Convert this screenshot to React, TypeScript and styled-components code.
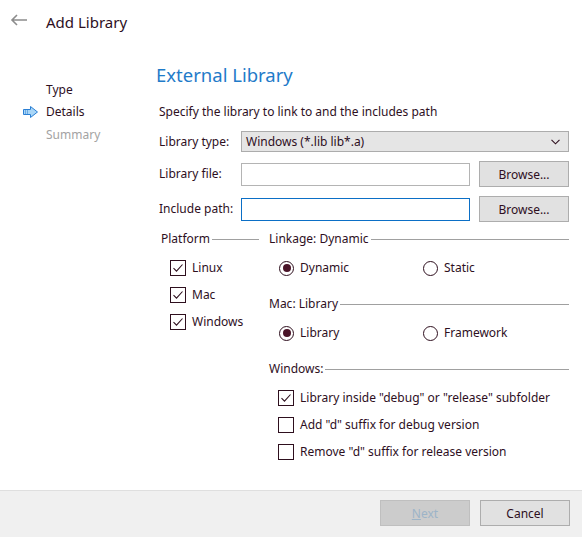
import styled, { createGlobalStyle } from "styled-components";

const TEXT = "#2e0f1e";

const GlobalStyle = createGlobalStyle`
  html, body {
    margin: 0;
    padding: 0;
    background: #ffffff;
  }
  body {
    font-family: "Noto Sans", "Open Sans", sans-serif;
    font-size: 12px;
    color: ${TEXT};
  }
`;

function BackArrow() {
  return (
    <svg width="18" height="12" viewBox="0 0 18 12">
      <path d="M17 6H2M7 1L2 6l5 5" fill="none" stroke="#8c8c8c" strokeWidth="1.6" />
    </svg>
  );
}

function StepArrow() {
  return (
    <svg width="17" height="14" viewBox="0 0 17 14">
      <path
        d="M1.5 4.5h7V1.5L15.5 7l-7 5.5v-3h-7z"
        fill="#a9d6f7"
        stroke="#2a7fd4"
        strokeWidth="1"
      />
      <path d="M3 6h1M5 6h1M3 8h1M5 8h1" stroke="#2a7fd4" strokeWidth="1" />
    </svg>
  );
}

function Chevron() {
  return (
    <svg width="9" height="6" viewBox="0 0 9 6">
      <path d="M0.5 0.8L4.5 4.8L8.5 0.8" fill="none" stroke={TEXT} strokeWidth="1.1" />
    </svg>
  );
}

function Check({ checked }: { checked: boolean }) {
  return (
    <CheckBox>
      {checked && (
        <svg width="14" height="14" viewBox="0 0 14 14">
          <path d="M2.5 7.2L5.5 10.2L11.5 3.5" fill="none" stroke={TEXT} strokeWidth="1.1" />
        </svg>
      )}
    </CheckBox>
  );
}

function CheckItem({ label, checked }: { label: string; checked: boolean }) {
  return (
    <Option>
      <Check checked={checked} />
      <span>{label}</span>
    </Option>
  );
}

function RadioItem({ label, selected }: { label: string; selected: boolean }) {
  return (
    <Option>
      <RadioCircle>{selected && <RadioDot />}</RadioCircle>
      <span>{label}</span>
    </Option>
  );
}

function GroupTitle({ children }: { children: string }) {
  return (
    <TitleRow>
      <span>{children}</span>
      <TitleLine />
    </TitleRow>
  );
}

export default function App() {
  return (
    <>
      <GlobalStyle />
      <Page>
        <Header>
          <BackButton>
            <BackArrow />
          </BackButton>
          <HeaderTitle>Add Library</HeaderTitle>
        </Header>

        <Main>
          <Sidebar>
            <Step>
              <StepIcon />
              <StepLabel>Type</StepLabel>
            </Step>
            <Step>
              <StepIcon>
                <StepArrow />
              </StepIcon>
              <StepLabel>Details</StepLabel>
            </Step>
            <Step>
              <StepIcon />
              <StepLabel $muted>Summary</StepLabel>
            </Step>
          </Sidebar>

          <Content>
            <Heading>External Library</Heading>
            <Description>Specify the library to link to and the includes path</Description>

            <FormGrid>
              <FieldLabel>Library type:</FieldLabel>
              <Combo>
                <span>Windows (*.lib lib*.a)</span>
                <Chevron />
              </Combo>

              <FieldLabel>Library file:</FieldLabel>
              <TextInput />
              <Button>Browse...</Button>

              <FieldLabel>Include path:</FieldLabel>
              <TextInput $focused />
              <Button>Browse...</Button>
            </FormGrid>

            <Groups>
              <PlatformColumn>
                <GroupTitle>Platform</GroupTitle>
                <PlatformList>
                  <CheckItem label="Linux" checked />
                  <CheckItem label="Mac" checked />
                  <CheckItem label="Windows" checked />
                </PlatformList>
              </PlatformColumn>

              <OptionsColumn>
                <Group>
                  <GroupTitle>Linkage: Dynamic</GroupTitle>
                  <RadioRow>
                    <RadioItem label="Dynamic" selected />
                    <RadioItem label="Static" selected={false} />
                  </RadioRow>
                </Group>
                <Group>
                  <GroupTitle>Mac: Library</GroupTitle>
                  <RadioRow>
                    <RadioItem label="Library" selected />
                    <RadioItem label="Framework" selected={false} />
                  </RadioRow>
                </Group>
                <Group>
                  <GroupTitle>Windows:</GroupTitle>
                  <WindowsList>
                    <CheckItem label={'Library inside "debug" or "release" subfolder'} checked />
                    <CheckItem label={'Add "d" suffix for debug version'} checked={false} />
                    <CheckItem label={'Remove "d" suffix for release version'} checked={false} />
                  </WindowsList>
                </Group>
              </OptionsColumn>
            </Groups>
          </Content>
        </Main>

        <Footer>
          <Button $disabled>
            <u>N</u>ext
          </Button>
          <Button>Cancel</Button>
        </Footer>
      </Page>
    </>
  );
}

const Page = styled.div`
  width: 582px;
  height: 537px;
  display: flex;
  flex-direction: column;
  background: #ffffff;
  overflow: hidden;
`;

const Header = styled.div`
  height: 44px;
  display: flex;
  align-items: center;
  padding-left: 10px;
`;

const BackButton = styled.div`
  width: 18px;
  height: 12px;
  display: flex;
  margin-top: -4px;
`;

const HeaderTitle = styled.h1`
  margin: 0 0 0 18px;
  font-size: 15px;
  font-weight: 400;
  color: ${TEXT};
`;

const Main = styled.div`
  flex: 1;
  display: flex;
`;

const Sidebar = styled.div`
  width: 156px;
  padding-top: 34px;
  display: flex;
  flex-direction: column;
`;

const Step = styled.div`
  height: 22.5px;
  display: flex;
  align-items: center;
`;

const StepIcon = styled.div`
  width: 46px;
  display: flex;
  justify-content: flex-start;
  padding-left: 22px;
  box-sizing: border-box;
`;

const StepLabel = styled.span<{ $muted?: boolean }>`
  color: ${({ $muted }) => ($muted ? "#a3a3a3" : TEXT)};
`;

const Content = styled.div`
  flex: 1;
  padding: 18px 13px 0 0;
  display: flex;
  flex-direction: column;
`;

const Heading = styled.h2`
  margin: 0;
  font-size: 18.5px;
  line-height: 26px;
  font-weight: 400;
  color: #1f7bc9;
`;

const Description = styled.p`
  margin: 15px 0 0 3px;
  line-height: 18px;
`;

const FormGrid = styled.div`
  margin: 10px 0 0 3px;
  display: grid;
  grid-template-columns: 73px 1fr 90px;
  column-gap: 9px;
  row-gap: 9px;
  align-items: center;
`;

const FieldLabel = styled.span`
  line-height: 18px;
  white-space: nowrap;
`;

const Combo = styled.div`
  grid-column: 2 / 4;
  height: 21px;
  box-sizing: border-box;
  border: 1px solid #acacac;
  background: #e5e5e5;
  display: flex;
  align-items: center;
  justify-content: space-between;
  padding: 0 8px 0 4px;
`;

const TextInput = styled.div<{ $focused?: boolean }>`
  height: 23px;
  box-sizing: border-box;
  border: 1px solid ${({ $focused }) => ($focused ? "#0b6fc6" : "#b4b4b4")};
  background: #ffffff;
`;

const Button = styled.div<{ $disabled?: boolean }>`
  width: 90px;
  height: 26px;
  box-sizing: border-box;
  display: flex;
  align-items: center;
  justify-content: center;
  border: 1px solid ${({ $disabled }) => ($disabled ? "#bfbfbf" : "#adadad")};
  background: ${({ $disabled }) => ($disabled ? "#cccccc" : "#e1e1e1")};
  color: ${({ $disabled }) => ($disabled ? "#9db4c8" : TEXT)};

  u {
    text-decoration-thickness: 1px;
  }
`;

const Groups = styled.div`
  margin: 8px 0 0 5px;
  display: flex;
  gap: 10px;
`;

const PlatformColumn = styled.div`
  width: 98px;
  display: flex;
  flex-direction: column;
`;

const OptionsColumn = styled.div`
  flex: 1;
  display: flex;
  flex-direction: column;
  gap: 18px;
`;

const Group = styled.div`
  display: flex;
  flex-direction: column;
  gap: 11px;
`;

const TitleRow = styled.div`
  display: flex;
  align-items: center;
  line-height: 18px;
`;

const TitleLine = styled.div`
  flex: 1;
  height: 1px;
  background: #a0a0a0;
  margin-left: 2px;
`;

const PlatformList = styled.div`
  margin: 11px 0 0 9px;
  display: flex;
  flex-direction: column;
  gap: 9px;
`;

const WindowsList = styled.div`
  padding-left: 9px;
  display: flex;
  flex-direction: column;
  gap: 9px;
`;

const RadioRow = styled.div`
  padding-left: 10px;
  display: grid;
  grid-template-columns: 144px 1fr;
`;

const Option = styled.div`
  display: flex;
  align-items: center;
  gap: 6px;
  line-height: 18px;
  white-space: nowrap;
`;

const CheckBox = styled.div`
  width: 16px;
  height: 16px;
  box-sizing: border-box;
  border: 1px solid ${TEXT};
  display: flex;
  align-items: center;
  justify-content: center;
  flex-shrink: 0;
`;

const RadioCircle = styled.div`
  width: 15px;
  height: 15px;
  box-sizing: border-box;
  border: 1px solid ${TEXT};
  border-radius: 50%;
  display: flex;
  align-items: center;
  justify-content: center;
  flex-shrink: 0;
`;

const RadioDot = styled.div`
  width: 8px;
  height: 8px;
  border-radius: 50%;
  background: #4a1428;
`;

const Footer = styled.div`
  height: 47px;
  box-sizing: border-box;
  border-top: 1px solid #dfdfdf;
  background: #f0f0f0;
  display: flex;
  justify-content: flex-end;
  gap: 10px;
  padding: 9px 12px 0 0;
`;
